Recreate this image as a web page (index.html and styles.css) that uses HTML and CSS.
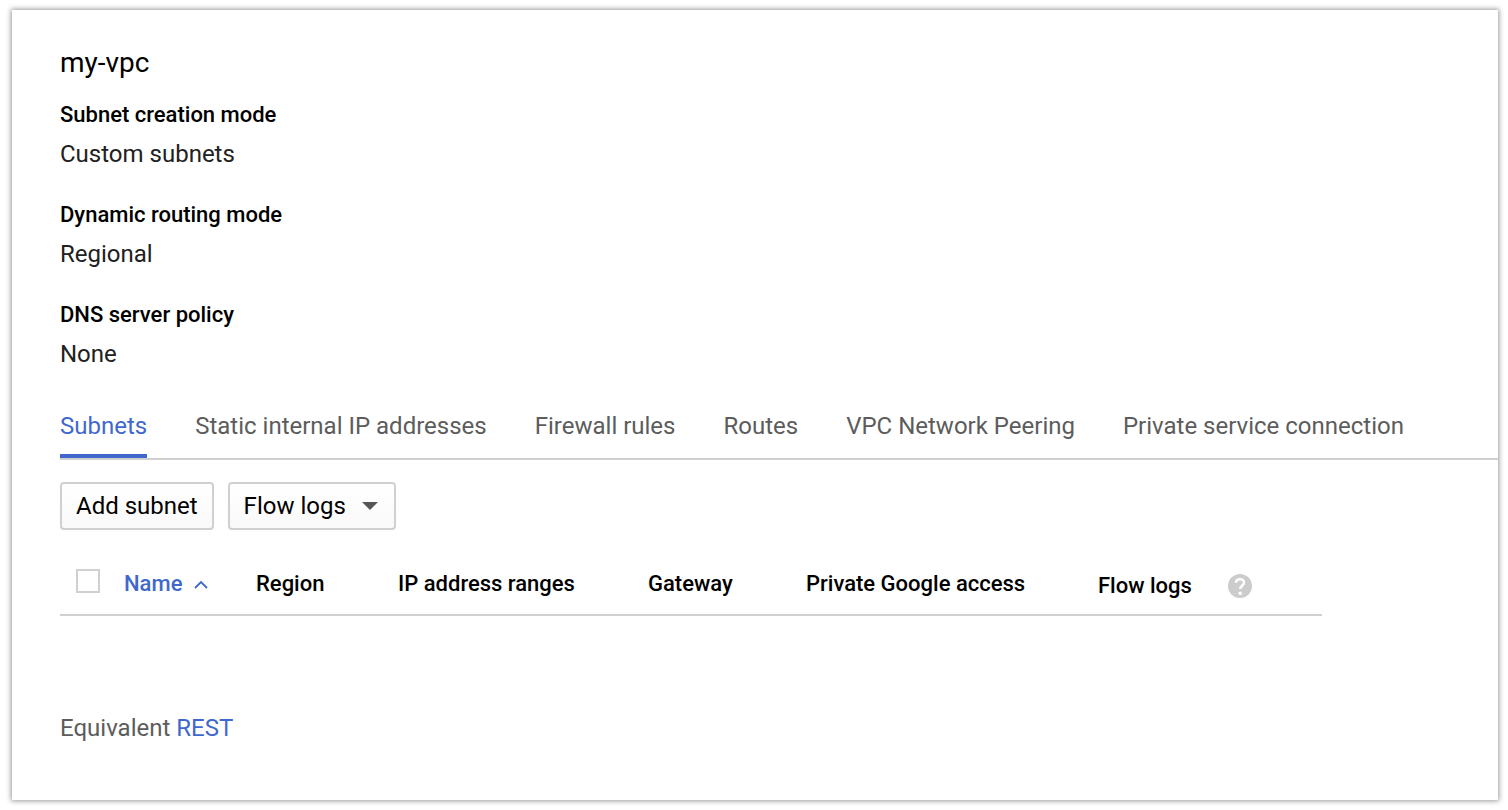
FILE: index.html
```html
<!DOCTYPE html>
<html lang="en">
<head>
<meta charset="utf-8">
<title>my-vpc</title>
<link rel="stylesheet" href="styles.css">
</head>
<body>
<main class="panel">
  <h1 class="title">my-vpc</h1>
  <dl class="details">
    <div class="detail"><dt>Subnet creation mode</dt><dd>Custom subnets</dd></div>
    <div class="detail"><dt>Dynamic routing mode</dt><dd>Regional</dd></div>
    <div class="detail"><dt>DNS server policy</dt><dd>None</dd></div>
  </dl>
  <nav class="tabs">
    <a class="tab active" href="#subnets" aria-current="page">Subnets</a>
    <a class="tab" href="#addresses">Static internal IP addresses</a>
    <a class="tab" href="#firewall">Firewall rules</a>
    <a class="tab" href="#routes">Routes</a>
    <a class="tab" href="#peering">VPC Network Peering</a>
    <a class="tab" href="#private">Private service connection</a>
  </nav>
  <div class="toolbar">
    <button class="button" type="button">Add subnet</button>
    <button class="button menu" type="button" aria-haspopup="true">Flow logs
      <svg class="caret" width="16" height="8" viewBox="0 0 16 8" aria-hidden="true"><path d="M0 0h16L8 8z"/></svg>
    </button>
  </div>
  <table class="subnets">
    <thead>
      <tr>
        <th class="select"><input class="check" type="checkbox" aria-label="Select all subnets"></th>
        <th class="name" aria-sort="ascending"><a class="sort" href="#name">Name
          <svg width="14" height="9" viewBox="0 0 14 9" aria-hidden="true"><path d="M1 8l6-6 6 6" fill="none" stroke="currentColor" stroke-width="1.800"/></svg></a></th>
        <th class="region">Region</th>
        <th class="ranges">IP address ranges</th>
        <th class="gateway">Gateway</th>
        <th class="access">Private Google access</th>
        <th class="logs"><span class="help-label">Flow logs
          <svg width="24" height="24" viewBox="0 0 24 24" role="img" aria-label="Help"><circle cx="12" cy="12" r="12" fill="#ccc"/><path d="M8 8.800C8 6.600 9.700 5.300 12 5.300s4 1.300 4 3.400c0 2.700-3.700 3-3.700 6.300" fill="none" stroke="#fff" stroke-width="2.500"/><circle cx="12.200" cy="19.300" r="1.800" fill="#fff"/></svg></span></th>
      </tr>
    </thead>
  </table>
  <p class="equivalent">Equivalent <a href="#rest">REST</a></p>
</main>
</body>
</html>
```
FILE: styles.css
```css
* { box-sizing: border-box; }
body {
  margin: 0;
  padding: 10px 10px 10px 12px;
  min-height: 100vh;
  display: flex;
  background: #fff;
  color: #212121;
  font: 24px/32px Roboto, "Liberation Sans", sans-serif;
}
.panel {
  flex: 1;
  min-width: 0;
  padding: 37px 0 32px 48px;
  background: #fff;
  box-shadow: 0 0 5px 1px #999;
}
.title {
  margin: 0 0 20px;
  color: #000;
  font-size: 28px;
  font-weight: 400;
  line-height: 32px;
}
.details { margin: 0; }
.detail { margin-bottom: 29px; }
dt, th {
  color: #000;
  font-size: 22px;
  font-weight: 500;
}
dt { margin-bottom: 7px; }
dd { margin: 0; }
.tabs {
  display: flex;
  gap: 48px;
  border-bottom: 2px solid #d0d0d0;
}
.tab {
  padding: 11px 0 12px;
  border-bottom: 4px solid transparent;
  color: #5c5c5c;
  text-decoration: none;
  white-space: nowrap;
}
.tab.active {
  border-color: #3f68cd;
  color: #3f68cd;
}
.toolbar {
  display: flex;
  gap: 14px;
  margin: 22px 0 24px;
}
.button {
  display: flex;
  align-items: center;
  gap: 16px;
  height: 48px;
  padding: 0 14px;
  border: 2px solid #d0d0d0;
  border-radius: 4px;
  background: linear-gradient(#fff, #f9f9f9);
  color: #000;
  font: inherit;
}
.menu { padding-right: 16px; }
.caret { fill: #555; }
.subnets {
  width: 1262px;
  max-width: 100%;
  border-collapse: collapse;
  table-layout: fixed;
  border-bottom: 2px solid #d0d0d0;
}
th {
  height: 61px;
  padding: 0;
  text-align: left;
  white-space: nowrap;
}
.select { width: 64px; padding: 0 0 6px 16px; }
.name { width: 132px; }
.region { width: 142px; }
.ranges { width: 250px; }
.gateway { width: 158px; }
.access { width: 292px; }
.logs { padding-top: 4px; }
.check {
  display: block;
  width: 24px;
  height: 24px;
  margin: 0;
  appearance: none;
  border: 2px solid #d0d0d0;
  background: #fff;
}
.sort, .help-label {
  display: flex;
  align-items: center;
}
.sort { gap: 12px; color: #3f68cd; text-decoration: none; }
.help-label { gap: 36px; }
.equivalent { margin: 96px 0 0; color: #5c5c5c; }
.equivalent a { color: #3f68cd; text-decoration: none; }
```
